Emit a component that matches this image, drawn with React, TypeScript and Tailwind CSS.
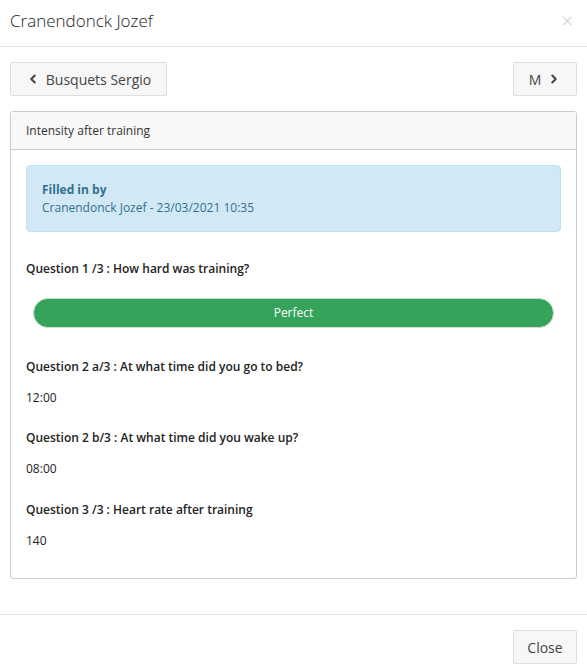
import { ChevronLeft, ChevronRight } from "lucide-react"

const questions = [
  { label: "Question 2 a/3 : At what time did you go to bed?", answer: "12:00", gap: "mt-[30px]" },
  { label: "Question 2 b/3 : At what time did you wake up?", answer: "08:00", gap: "mt-[22px]" },
  { label: "Question 3 /3 : Heart rate after training", answer: "140", gap: "mt-[23px]" },
]

export default function App() {
  return (
    <div className="w-[587px] h-[672px] bg-white text-[#222] font-['Open_Sans',sans-serif] flex flex-col">
      {/* Header */}
      <div className="h-[47px] flex items-center justify-between pl-[10px] pr-[14px] pb-[5px] border-b border-[#e5e5e5]">
        <h4 className="text-[17px] font-light text-[#222] leading-none">Cranendonck Jozef</h4>
        <span className="text-[20px] font-light text-[#c8c8c8] leading-none">×</span>
      </div>

      {/* Body */}
      <div className="px-[10px] pt-[15px] pb-[35px] flex flex-col">
        <div className="flex justify-between">
          <button className="h-[34px] w-[157px] flex items-center justify-center gap-[6px] bg-[#f7f7f7] border border-[#ddd] rounded-[2px] text-[14px] text-[#444]">
            <ChevronLeft className="w-[14px] h-[14px]" strokeWidth={3.5} />
            Busquets Sergio
          </button>
          <button className="h-[34px] w-[64px] flex items-center justify-center gap-[6px] bg-[#f7f7f7] border border-[#ddd] rounded-[2px] text-[14px] text-[#444]">
            M
            <ChevronRight className="w-[14px] h-[14px]" strokeWidth={3.5} />
          </button>
        </div>

        <div className="mt-[15px] h-[468px] border border-[#ccc] rounded-[3px] flex flex-col">
          <div className="h-[38px] bg-[#f8f8f8] border-b border-[#ccc] flex items-center px-[15px] text-[12px] text-[#333]">
            Intensity after training
          </div>
          <div className="px-[15px] pt-[15px] flex flex-col">
            <div className="h-[67px] bg-[#d2e9f5] border border-[#bce3ee] rounded-[4px] px-[15px] flex flex-col justify-center text-[12px] text-[#31708f] leading-[18px]">
              <span className="font-bold">Filled in by</span>
              <span>Cranendonck Jozef - 23/03/2021 10:35</span>
            </div>

            <div className="mt-[28px] text-[12px] font-semibold leading-[18px]">
              Question 1 /3 : How hard was training?
            </div>
            <div className="mt-[20px] mx-[7px] h-[30px] rounded-full bg-[#35a35a] border border-[#c9dccf] flex items-center justify-center text-white text-[12px]">
              Perfect
            </div>

            {questions.map((q) => (
              <div key={q.label} className={q.gap}>
                <div className="text-[12px] font-semibold leading-[18px]">{q.label}</div>
                <div className="mt-[13px] text-[12px] leading-[18px]">{q.answer}</div>
              </div>
            ))}
          </div>
        </div>
      </div>

      {/* Footer */}
      <div className="border-t border-[#e5e5e5] flex justify-end px-[10px] pt-[15px]">
        <button className="h-[34px] w-[64px] bg-[#f7f7f7] border border-[#ddd] rounded-[2px] text-[14px] text-[#444]">
          Close
        </button>
      </div>
    </div>
  )
}
